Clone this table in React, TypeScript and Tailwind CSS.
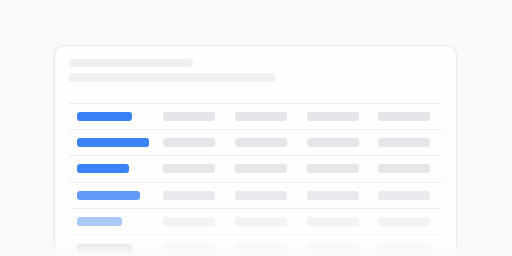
import React from "react";

const firstCol = [
  { w: 55, c: "bg-[#3b82f6]" },
  { w: 72, c: "bg-[#3b82f6]" },
  { w: 52, c: "bg-[#3b82f6]" },
  { w: 63, c: "bg-[#3b82f6]" },
  { w: 45, c: "bg-[#3b82f6]" },
  { w: 55, c: "bg-[#aab0b8]" },
];

const rowOpacity = ["opacity-100", "opacity-100", "opacity-100", "opacity-[0.8]", "opacity-[0.42]", "opacity-[0.35]"];

export default function App() {
  return (
    <div className="relative w-[512px] h-[256px] overflow-hidden bg-[#fafafa] pt-[45px] pl-[54px]" style={{ fontFamily: "Inter, 'Liberation Sans', sans-serif" }}>
      <div className="w-[403px] h-[260px] rounded-[11px] border border-[#e8e8ea] bg-[#fefefe] px-[14px] pt-[13px] shadow-[0_1px_3px_rgba(0,0,0,0.05)]">
        <div className="h-[8px] w-[124px] rounded-[3px] bg-[#f0f0f1]" />
        <div className="mt-[6px] h-[9px] w-[206px] rounded-[3px] bg-[#f0f0f1]" />
        <div className="mt-[20.5px] border-t border-[#ececee]">
          {firstCol.map((b, i) => (
            <div
              key={i}
              className={`grid grid-cols-[86px_repeat(4,1fr)] items-center h-[26.4px] border-b border-[#ececee] ${rowOpacity[i]}`}
            >
              <div className="pl-2">
                <div className={`h-[9px] rounded-[3px] ${b.c}`} style={{ width: b.w }} />
              </div>
              {[0, 1, 2, 3].map((j) => (
                <div key={j} className="pl-2">
                  <div className="h-[9px] w-[52px] rounded-[3px] bg-[#e5e6ea]" />
                </div>
              ))}
            </div>
          ))}
        </div>
      </div>
      <div className="absolute left-0 right-0 bottom-0 h-[18px] bg-gradient-to-b from-[#fafafa00] to-[#fafafa]" />
    </div>
  );
}
